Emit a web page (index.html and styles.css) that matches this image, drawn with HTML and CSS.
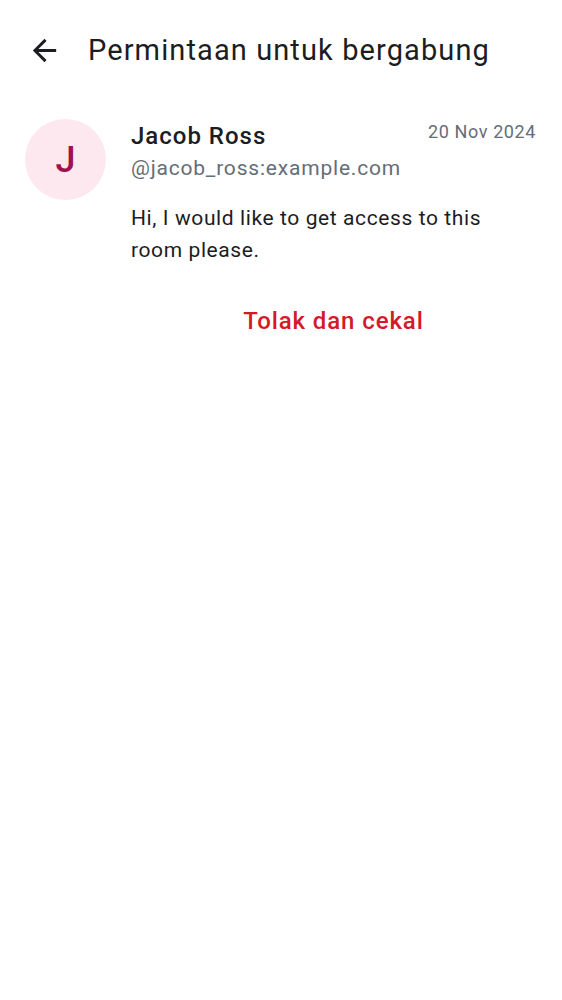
FILE: index.html
```html
<!DOCTYPE html>
<html>
<head>
<meta charset="utf-8">
<link rel="stylesheet" href="styles.css">
</head>
<body>
<div class="topbar">
  <button class="back" aria-label="Back">
    <svg width="35" height="35" viewBox="0 0 24 24"><path d="M20 11H7.83l5.59-5.59L12 4l-8 8 8 8 1.41-1.41L7.83 13H20v-2z" fill="#1b1d22"/></svg>
  </button>
  <h1 class="title">Permintaan untuk bergabung</h1>
</div>
<div class="request">
  <div class="avatar">J</div>
  <div class="content">
    <div class="head">
      <div class="name">Jacob Ross</div>
      <div class="date">20 Nov 2024</div>
    </div>
    <div class="handle">@jacob_ross:example.com</div>
    <div class="message">Hi, I would like to get access to this room please.</div>
    <div class="actions">
      <button class="ban">Tolak dan cekal</button>
    </div>
  </div>
</div>
</body>
</html>
```
FILE: styles.css
```css
* { box-sizing: border-box; }
body {
  margin: 0;
  background: #fff;
  font-family: Roboto, "Noto Sans", sans-serif;
  color: #1b1d22;
}
.topbar {
  display: flex;
  align-items: center;
  height: 100px;
  padding: 0 0 0 22px;
}
.back {
  border: 0;
  background: none;
  padding: 0;
  width: 44px;
  height: 44px;
  display: flex;
  align-items: center;
  justify-content: center;
  margin-right: 22px;
}
.title {
  margin: 0;
  font-size: 29px;
  font-weight: 400;
  letter-spacing: 1.1px;
}
.request {
  display: flex;
  padding: 21px 26px 0 25px;
}
.avatar {
  width: 81px;
  height: 81px;
  border-radius: 50%;
  background: #fde8ef;
  color: #a11050;
  font-size: 36px;
  font-weight: 500;
  display: flex;
  align-items: center;
  justify-content: center;
  flex-shrink: 0;
  margin-top: -2px;
  margin-right: 25px;
}
.content { flex: 1; }
.head {
  display: flex;
  justify-content: space-between;
  align-items: baseline;
}
.name {
  font-size: 24px;
  font-weight: 500;
  line-height: 30px;
  letter-spacing: 1px;
}
.date {
  font-size: 18px;
  color: #656d77;
  letter-spacing: 0.6px;
  transform: translateY(-6px);
}
.handle {
  font-size: 21px;
  color: #656d77;
  line-height: 34px;
  letter-spacing: 0.8px;
}
.message {
  margin-top: 17px;
  font-size: 21px;
  line-height: 32px;
  letter-spacing: 0.6px;
}
.actions {
  display: flex;
  justify-content: center;
  margin-top: 39px;
}
.ban {
  border: 0;
  background: none;
  font-family: inherit;
  font-size: 24px;
  font-weight: 500;
  color: #d51928;
  letter-spacing: 0.9px;
  padding: 0;
  line-height: 32px;
}
```
